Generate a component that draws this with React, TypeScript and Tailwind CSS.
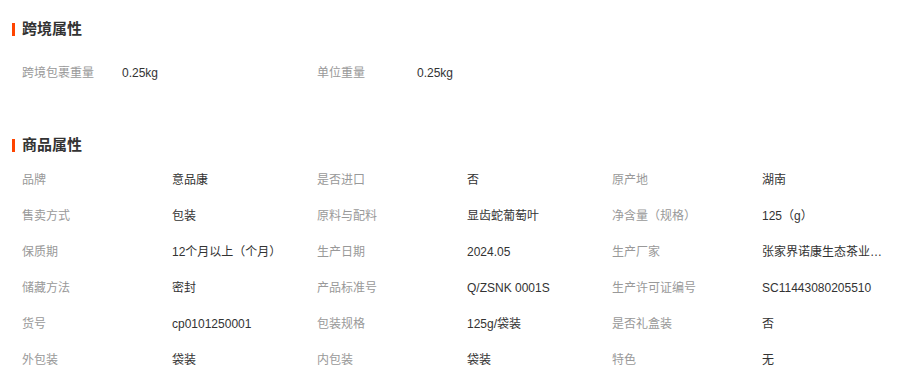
type Attr = { label: string; value: string }

const crossBorder: Attr[] = [
  { label: '跨境包裹重量', value: '0.25kg' },
  { label: '单位重量', value: '0.25kg' },
]

const productAttrs: Attr[] = [
  { label: '品牌', value: '意品康' },
  { label: '是否进口', value: '否' },
  { label: '原产地', value: '湖南' },
  { label: '售卖方式', value: '包装' },
  { label: '原料与配料', value: '显齿蛇葡萄叶' },
  { label: '净含量（规格）', value: '125（g）' },
  { label: '保质期', value: '12个月以上（个月）' },
  { label: '生产日期', value: '2024.05' },
  { label: '生产厂家', value: '张家界诺康生态茶业…' },
  { label: '储藏方法', value: '密封' },
  { label: '产品标准号', value: 'Q/ZSNK 0001S' },
  { label: '生产许可证编号', value: 'SC11443080205510' },
  { label: '货号', value: 'cp0101250001' },
  { label: '包装规格', value: '125g/袋装' },
  { label: '是否礼盒装', value: '否' },
  { label: '外包装', value: '袋装' },
  { label: '内包装', value: '袋装' },
  { label: '特色', value: '无' },
]

const SectionTitle = ({ title }: { title: string }) => (
  <div className="flex items-center h-5">
    <span className="w-[3px] h-[13px] bg-[#ff4400]" />
    <h2 className="ml-[7px] text-[15px] font-bold text-[#333] leading-5">{title}</h2>
  </div>
)

export default function App() {
  return (
    <div
      className="w-[907px] h-[389px] bg-white overflow-hidden pt-[19px] pl-3 text-xs"
      style={{ fontFamily: '"Liberation Sans", "Noto Sans CJK SC", sans-serif' }}
    >
      <SectionTitle title="跨境属性" />
      <div className="mt-[16px] pl-[10px] flex">
        {crossBorder.map((a) => (
          <div key={a.label} className="flex items-center h-9 w-[295px]">
            <span className="w-[100px] text-[#999]">{a.label}</span>
            <span className="w-[195px] text-[#333]">{a.value}</span>
          </div>
        ))}
      </div>

      <div className="mt-[44px]">
        <SectionTitle title="商品属性" />
      </div>
      <div className="mt-[7px] pl-[10px] grid grid-cols-[295px_295px_295px]">
        {productAttrs.map((a) => (
          <div key={a.label} className="flex items-center h-9">
            <span className="w-[150px] shrink-0 text-[#999]">{a.label}</span>
            <span className="whitespace-nowrap text-[#333]">{a.value}</span>
          </div>
        ))}
      </div>
    </div>
  )
}
